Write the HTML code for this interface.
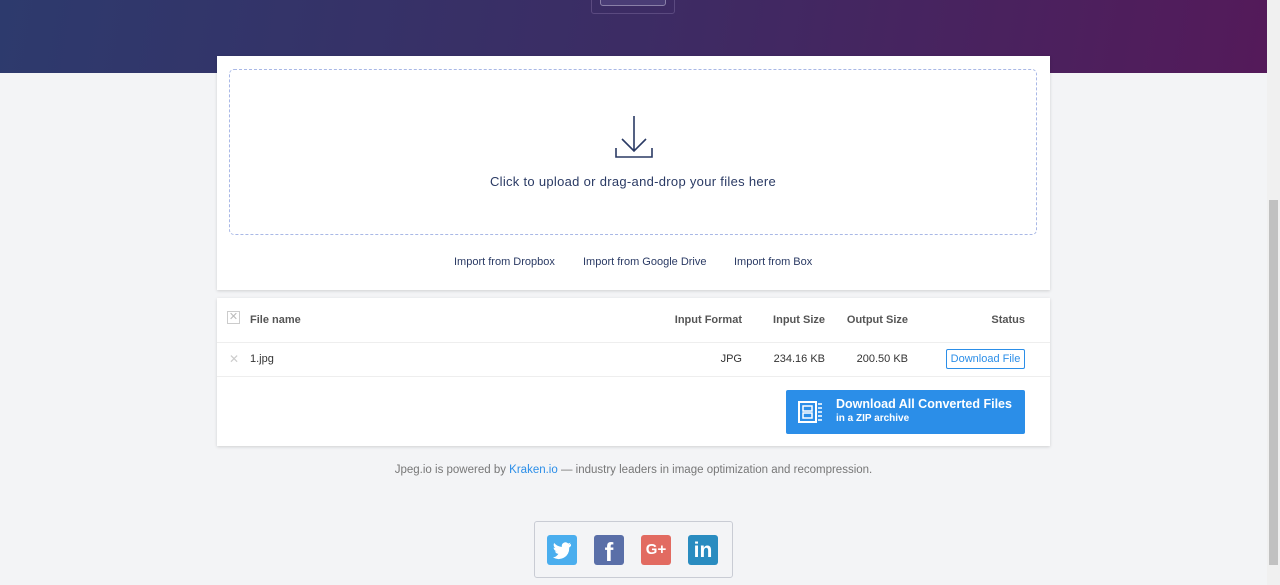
<!DOCTYPE html>
<html><head><meta charset="utf-8"><style>
*{box-sizing:border-box;margin:0;padding:0}
body{width:1280px;height:585px;overflow:hidden;background:#f3f4f6;font-family:"Liberation Sans",sans-serif;position:relative}
.hdr{position:absolute;left:0;top:0;width:1267px;height:73px;background:linear-gradient(100deg,#2d3a6d 0%,#3c2c64 50%,#541a5a 100%)}
.hb{position:absolute;left:591px;top:-4px;width:84px;height:18px;border:1px solid #5b4a80;border-radius:3px}
.hb2{position:absolute;left:600px;top:-4px;width:66px;height:10px;background:#4a3d76;border:1px solid #8a80a8;border-radius:3px}
.card{position:absolute;left:217px;width:833px;background:#fff;box-shadow:0 1px 3px rgba(0,0,0,.15)}
.drop{position:absolute;left:12px;top:13px;width:808px;height:166px;border:1px dashed #a9b8e6;border-radius:5px}
.drop p{position:absolute;top:104px;width:100%;text-align:center;color:#2a3a64;font-size:13px;letter-spacing:.3px}
.imp{position:absolute;top:200px;font-size:11px;color:#2a3a64}
.t{position:absolute;font-size:11px;color:#555}
.r{text-align:right}
.sb{position:absolute;left:1267px;top:0;width:13px;height:585px;background:#f0f0f0}
.sbt{position:absolute;left:1269px;top:200px;width:9px;height:365px;background:#c1c1c1}
.soc{position:absolute;left:534px;top:521px;width:199px;height:57px;border:1px solid #c9ccd4;border-radius:3px}
.ic{position:absolute;top:13px;width:30px;height:30px;border-radius:3px;color:#fff;font-weight:bold;text-align:center}
</style></head><body>
<div class="hdr"><div class="hb"></div><div class="hb2"></div></div>
<div class="card" style="top:56px;height:234px">
 <div class="drop">
  <svg style="position:absolute;left:384px;top:45px" width="40" height="44" viewBox="0 0 40 44"><path d="M20 1V36M8 24L20 36L32 24M2 33V42H38V33" fill="none" stroke="#2a3a64" stroke-width="1.6"/></svg>
  <p>Click to upload or drag-and-drop your files here</p>
 </div>
 <div class="imp" style="left:237px">Import from Dropbox</div>
 <div class="imp" style="left:366px">Import from Google Drive</div>
 <div class="imp" style="left:517px">Import from Box</div>
</div>
<div class="card" style="top:298px;height:148px">
 <div style="position:absolute;left:10px;top:13px;width:13px;height:13px;border:1px solid #ccc;color:#bbb;font-size:11px;line-height:11px;text-align:center">✕</div>
 <div class="t" style="left:33px;top:16px;font-weight:bold">File name</div>
 <div class="t r" style="right:308px;top:16px;font-weight:bold">Input Format</div>
 <div class="t r" style="right:225px;top:16px;font-weight:bold">Input Size</div>
 <div class="t r" style="right:142px;top:16px;font-weight:bold">Output Size</div>
 <div class="t r" style="right:25px;top:16px;font-weight:bold">Status</div>
 <div style="position:absolute;left:0;top:44px;width:100%;border-top:1px solid #eee"></div>
 <div class="t" style="left:12px;top:54px;color:#ccc;font-size:12px">✕</div>
 <div class="t" style="left:33px;top:55px;color:#333">1.jpg</div>
 <div class="t r" style="right:308px;top:55px;color:#333">JPG</div>
 <div class="t r" style="right:225px;top:55px;color:#333">234.16 KB</div>
 <div class="t r" style="right:142px;top:55px;color:#333">200.50 KB</div>
 <div style="position:absolute;left:729px;top:51px;width:79px;height:20px;border:1px solid #2b8ee8;border-radius:2px;color:#2b8ee8;font-size:11px;text-align:center;line-height:18px">Download File</div>
 <div style="position:absolute;left:0;top:78px;width:100%;border-top:1px solid #eee"></div>
 <div style="position:absolute;left:569px;top:92px;width:239px;height:44px;background:#2b8ee8;border-radius:2px;color:#fff">
  <svg style="position:absolute;left:11px;top:8px" width="28" height="28" viewBox="0 0 28 28"><rect x="2" y="4" width="17" height="20" fill="none" stroke="#fff" stroke-width="2"/><rect x="6" y="8" width="9" height="5" fill="none" stroke="#fff" stroke-width="1.5"/><rect x="6" y="15" width="9" height="5" fill="none" stroke="#fff" stroke-width="1.5"/><path d="M21 6h4M21 10h4M21 14h4M21 18h4M21 22h4" stroke="#fff" stroke-width="1.5"/></svg>
  <div style="position:absolute;left:50px;top:7px;font-size:12.5px;font-weight:bold">Download All Converted Files</div>
  <div style="position:absolute;left:50px;top:23px;font-size:10px;font-weight:bold">in a ZIP archive</div>
 </div>
</div>
<div style="position:absolute;top:464px;width:1267px;text-align:center;font-size:11.5px;color:#777">Jpeg.io is powered by <span style="color:#2b8ee8">Kraken.io</span> — industry leaders in image optimization and recompression.</div>
<div class="soc">
 <div class="ic" style="left:12px;background:#4aaeee"><svg width="30" height="30" viewBox="0 0 30 30"><path d="M24 9c-.7.3-1.4.5-2.1.6.8-.5 1.3-1.2 1.6-2-.7.4-1.5.7-2.3.9a3.7 3.7 0 0 0-6.3 3.4C11.8 11.7 9 10.2 7.2 8c-1 1.7-.5 3.9 1.1 5-.6 0-1.2-.2-1.7-.5 0 1.8 1.3 3.3 3 3.7-.5.2-1.1.2-1.7.1.5 1.5 1.9 2.5 3.5 2.6A7.4 7.4 0 0 1 6 22.4 10.5 10.5 0 0 0 22.2 13v-.5c.7-.5 1.3-1.1 1.8-1.8z" fill="#fff"/></svg></div>
 <div class="ic" style="left:59px;background:#5a6fa8;font-size:26px;line-height:34px">f</div>
 <div class="ic" style="left:106px;background:#e26b61;font-size:15px;line-height:30px">G+</div>
 <div class="ic" style="left:153px;background:#2a8cc0;font-size:21px;line-height:32px">in</div>
</div>
<div class="sb"></div><div class="sbt"></div>
</body></html>
